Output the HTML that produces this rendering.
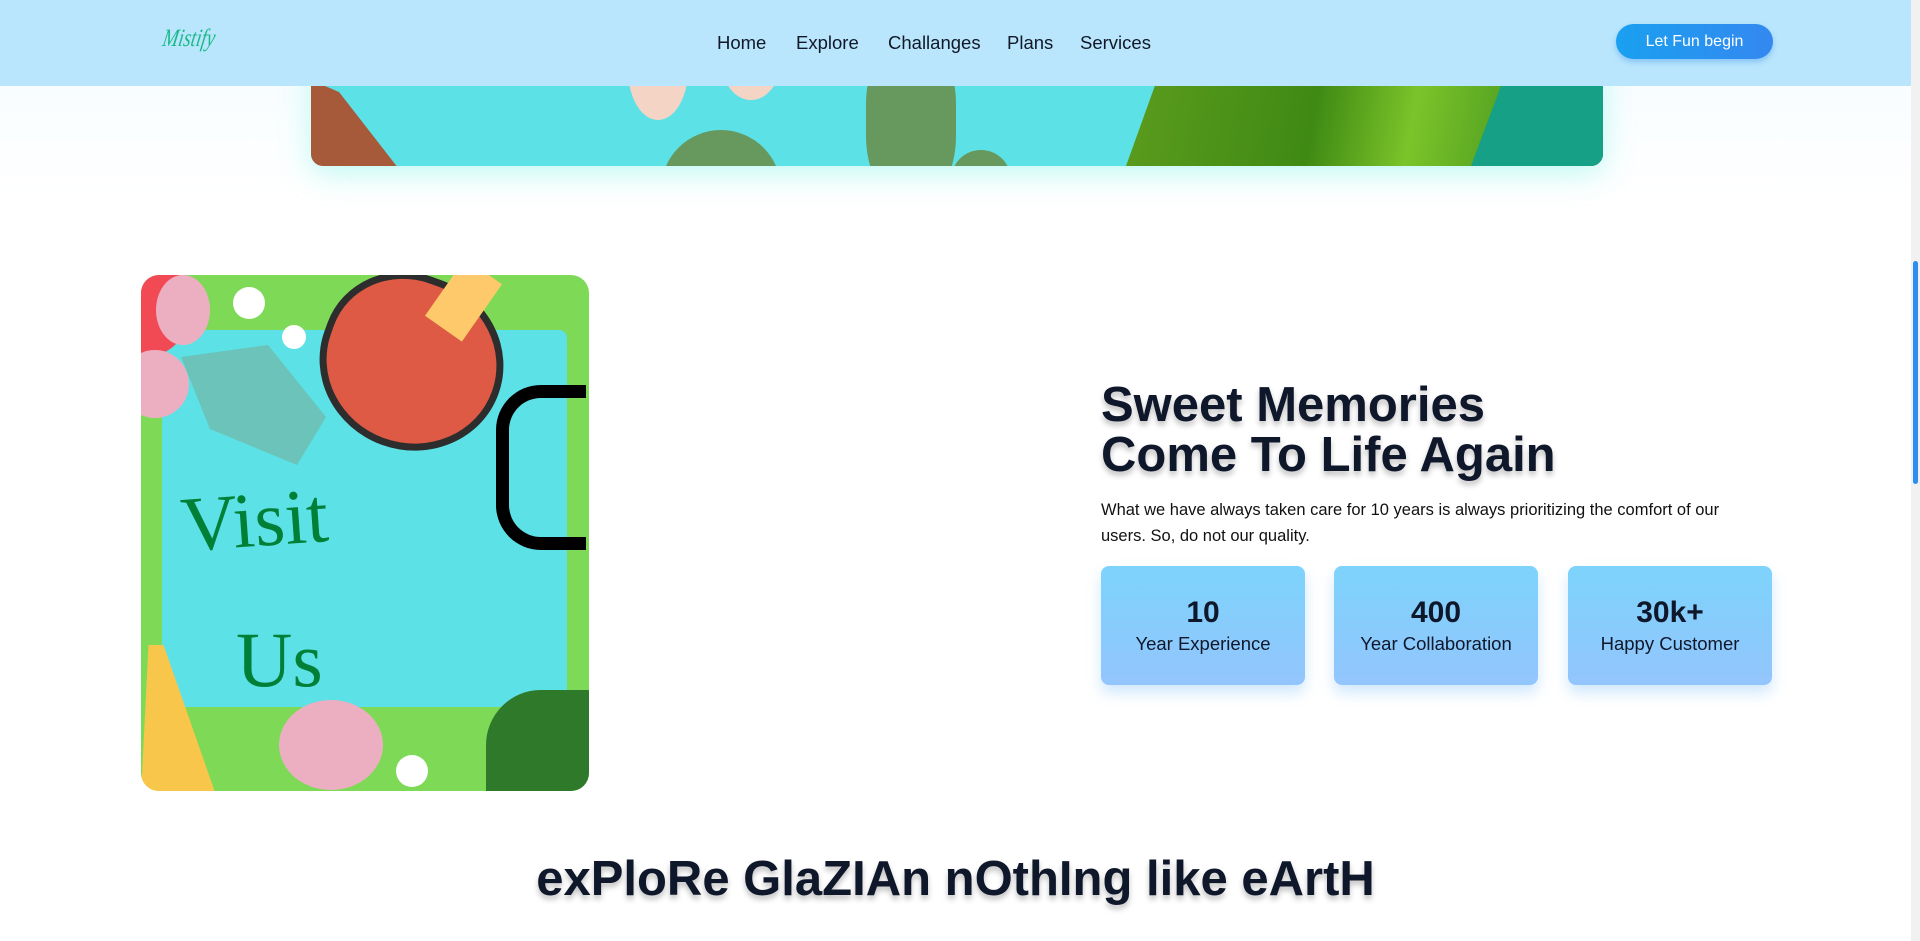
<!DOCTYPE html>
<html><head><meta charset="utf-8"><style>
*{margin:0;padding:0;box-sizing:border-box}
body{width:1920px;height:941px;overflow:hidden;background:#fff;font-family:"Liberation Sans","DejaVu Sans",sans-serif;position:relative}
.top{position:absolute;left:0;top:0;width:1911px;height:200px;background:linear-gradient(#f3fbff,#fff)}
nav{position:absolute;left:0;top:0;width:1911px;height:86px;background:#b9e6fc;z-index:5}
.logo{position:absolute;left:163px;top:25px;font-family:"Liberation Serif",serif;font-style:italic;color:#1bb98a;font-size:25px;transform:skewX(-10deg) scaleX(.75);transform-origin:left}
.links{position:absolute;top:32px;left:717px;font-size:18.5px;color:#111827}
.links span{position:absolute;white-space:nowrap}
.btn{position:absolute;left:1616px;top:24px;width:157px;height:35px;border-radius:18px;background:linear-gradient(90deg,#1aa0f0,#3488f0);color:#fff;font-size:16px;text-align:center;line-height:35px;box-shadow:0 3px 6px rgba(40,130,240,.35)}
.banner{position:absolute;left:311px;top:60px;width:1292px;height:106px;border-radius:0 0 12px 12px;overflow:hidden;background:#5ce1e6;box-shadow:0 8px 30px rgba(80,240,220,.35)}
.pic{position:absolute;left:141px;top:275px;width:448px;height:516px;border-radius:18px;overflow:hidden;background:#7ed957}
h2{position:absolute;left:1101px;top:380px;font-size:49px;line-height:50px;color:#0f172a;font-weight:700;text-shadow:0 4px 6px rgba(0,0,0,.25)}
p.d{position:absolute;left:1101px;top:497px;width:660px;font-size:16.5px;line-height:26px;color:#111}
.card{position:absolute;top:566px;width:204px;height:119px;border-radius:8px;background:linear-gradient(#7dd3fc,#93c5fd);box-shadow:0 8px 14px rgba(120,190,250,.35);text-align:center;color:#0f172a}
.card b{display:block;font-size:30px;margin-top:30px;line-height:34px}
.card span{display:block;font-size:18.5px;margin-top:3px}
h3{position:absolute;left:0;width:1911px;text-align:center;top:851px;font-size:49px;font-weight:700;color:#0f172a;text-shadow:0 4px 6px rgba(0,0,0,.25)}
.sb{position:absolute;right:0;top:0;width:9px;height:941px;background:#f1f1f1}
.sb i{position:absolute;left:2px;top:261px;width:5px;height:223px;background:#2b8ef0;border-radius:3px}
</style></head><body>
<div class="top"></div>
<div class="banner">
 <div style="position:absolute;left:0;top:20px;width:140px;height:120px;background:#a65a3a;clip-path:polygon(0 0,20% 10%,80% 100%,0 100%)"></div>
 <div style="position:absolute;left:317px;top:-40px;width:60px;height:100px;border-radius:50%;background:#f3d4c5"></div>
 <div style="position:absolute;left:410px;top:-40px;width:60px;height:80px;border-radius:50%;background:#f3d4c5"></div>
 <div style="position:absolute;left:350px;top:70px;width:120px;height:120px;border-radius:50%;background:#67995e"></div>
 <div style="position:absolute;left:555px;top:-20px;width:90px;height:160px;border-radius:40%;background:#67995e"></div>
 <div style="position:absolute;left:640px;top:90px;width:60px;height:60px;border-radius:50%;background:#67995e"></div>
 <div style="position:absolute;left:815px;top:0;width:477px;height:106px;background:linear-gradient(100deg,#5c9c1e,#3f8a14 40%,#7bc42a 60%,#2a7d18);clip-path:polygon(8% 0,100% 0,100% 100%,0 100%)"></div>
 <div style="position:absolute;left:1160px;top:0;width:132px;height:106px;background:#16a085;clip-path:polygon(30% 0,100% 0,100% 100%,0 100%)"></div>
</div>
<nav>
 <div class="logo">Mistify</div>
 <div class="links"><span style="left:0">Home</span><span style="left:79px">Explore</span><span style="left:171px">Challanges</span><span style="left:290px">Plans</span><span style="left:363px">Services</span></div>
 <div class="btn">Let Fun begin</div>
</nav>
<div class="pic">
 <div style="position:absolute;left:21px;top:55px;width:405px;height:377px;background:#5ce1e6;border-radius:8px"></div>
 <div style="position:absolute;left:-30px;top:-20px;width:80px;height:100px;border-radius:50%;background:#f24a55"></div>
 <div style="position:absolute;left:15px;top:0;width:54px;height:70px;border-radius:50%;background:#ecafc2"></div>
 <div style="position:absolute;left:-20px;top:75px;width:68px;height:68px;border-radius:50%;background:#ecafc2"></div>
 <div style="position:absolute;left:40px;top:70px;width:145px;height:120px;background:#6bc3b9;clip-path:polygon(0 10%,60% 0,100% 60%,80% 100%,20% 70%)"></div>
 <div style="position:absolute;left:92px;top:12px;width:32px;height:32px;border-radius:50%;background:#fff"></div>
 <div style="position:absolute;left:141px;top:50px;width:24px;height:24px;border-radius:50%;background:#fff"></div>
 <div style="position:absolute;left:178px;top:0;width:185px;height:175px;border-radius:45% 50% 50% 50%;background:#de5a45;border:7px solid #2d2d2d;transform:rotate(20deg)"></div>
 <div style="position:absolute;left:300px;top:-10px;width:45px;height:70px;background:#fdc96a;transform:rotate(35deg)"></div>
 <div style="position:absolute;left:355px;top:110px;width:90px;height:165px;border:13px solid #000;border-right:none;border-radius:45px 0 0 45px"></div>
 <div style="position:absolute;left:40px;top:200px;font-family:'Liberation Serif',serif;font-size:78px;color:#008037;transform:rotate(-4deg)">Visit</div>
 <div style="position:absolute;left:95px;top:340px;font-family:'Liberation Serif',serif;font-size:78px;color:#008037">Us</div>
 <div style="position:absolute;left:138px;top:425px;width:104px;height:90px;border-radius:50%;background:#ecafc2"></div>
 <div style="position:absolute;left:0;top:370px;width:75px;height:150px;background:#f8c64a;clip-path:polygon(10% 0,30% 0,100% 100%,0 100%)"></div>
 <div style="position:absolute;left:255px;top:480px;width:32px;height:32px;border-radius:50%;background:#fff"></div>
 <div style="position:absolute;left:345px;top:415px;width:110px;height:110px;border-radius:50% 0 0 0;background:#2f7a2a"></div>
</div>
<h2>Sweet Memories<br>Come To Life Again</h2>
<p class="d">What we have always taken care for 10 years is always prioritizing the comfort of our users. So, do not our quality.</p>
<div class="card" style="left:1101px"><b>10</b><span>Year Experience</span></div>
<div class="card" style="left:1334px"><b>400</b><span>Year Collaboration</span></div>
<div class="card" style="left:1568px"><b>30k+</b><span>Happy Customer</span></div>
<h3>exPloRe GlaZIAn nOthIng like eArtH</h3>
<div class="sb"><i></i></div>
</body></html>
